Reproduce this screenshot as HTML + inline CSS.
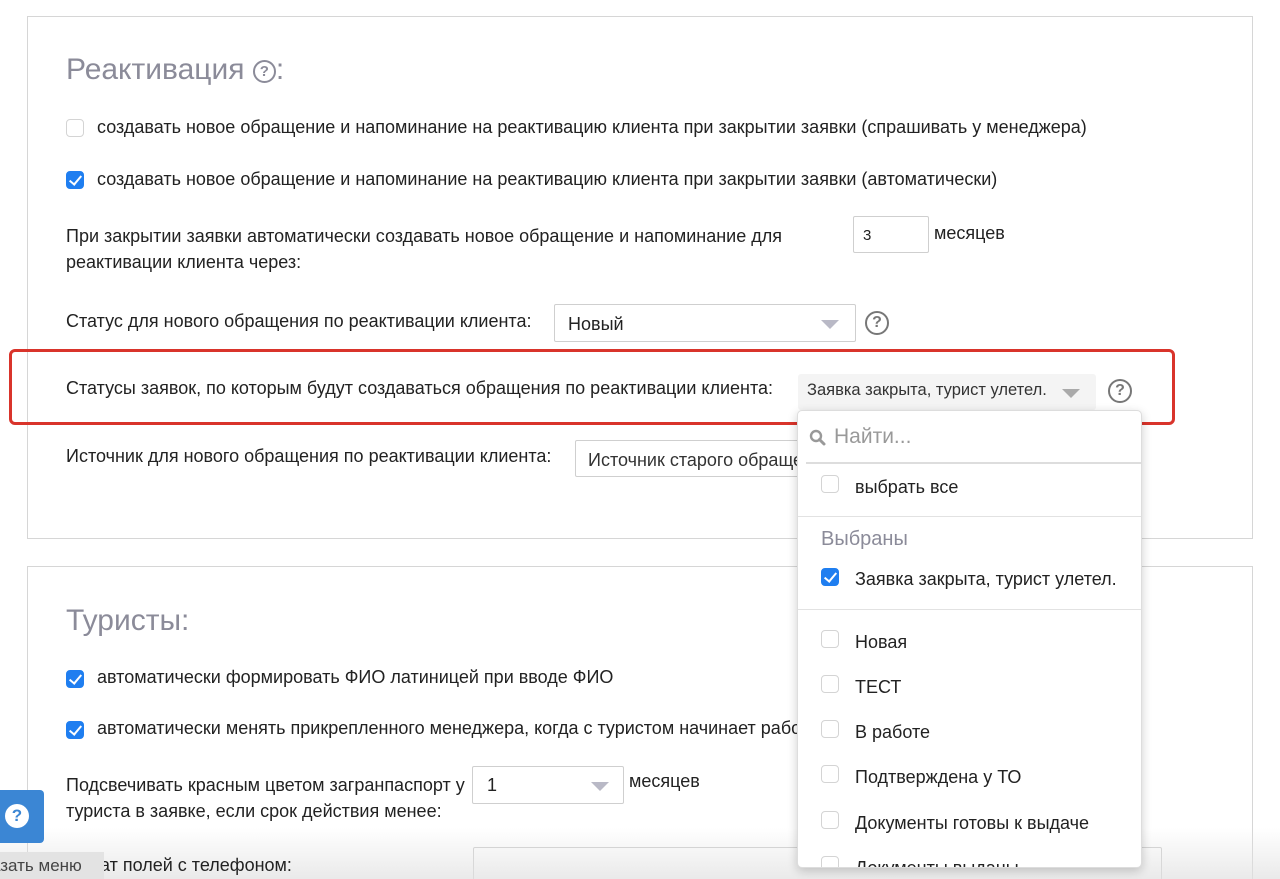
<!DOCTYPE html>
<html><head><meta charset="utf-8"><style>
*{box-sizing:border-box;margin:0;padding:0}
html,body{width:1280px;height:879px;overflow:hidden}
body{background:#fff;font-family:"Liberation Sans",Arial,sans-serif;color:#222;font-size:18px;position:relative}
.a{position:absolute;white-space:nowrap}
.panel{position:absolute;left:27px;width:1226px;border:1px solid #d6d6d6;background:#fff}
.h{color:#8b8b99;font-size:30px}
.cb{position:absolute;width:18px;height:18px;border:1px solid #d4d4d4;border-radius:4px;background:#fff}
.cb.on{background:#1f7ef0;border-color:#1f7ef0}
.cb.on:after{content:"";position:absolute;left:5px;top:1px;width:5px;height:10px;border:solid #fff;border-width:0 2.5px 2.5px 0;transform:rotate(40deg)}
.sel{position:absolute;border:1px solid #cfcfcf;background:#fff;border-radius:2px}
.tri{position:absolute;width:0;height:0;border-left:9px solid transparent;border-right:9px solid transparent;border-top:9px solid #b9b9c6}
.q{position:absolute;width:24px;height:24px;border:2px solid #777;border-radius:50%;color:#777;font-size:16px;font-weight:bold;text-align:center;line-height:20px}
.dd{position:absolute;left:797px;top:410px;width:345px;height:458px;background:#fff;border:1px solid #ddd;border-radius:5px;box-shadow:0 3px 10px rgba(0,0,0,.2);overflow:hidden}
.dd .sep{position:absolute;left:0;right:0;height:1px;background:#e2e2e2}
</style></head><body>
<div class="panel" style="top:16px;height:523px"></div>
<div class="panel" style="top:566px;height:330px"></div>

<div class="a h" style="left:66px;top:53px">Реактивация <span style="display:inline-block;width:23px;height:23px;border:2px solid #8b8b99;border-radius:50%;font-size:15px;font-weight:bold;text-align:center;line-height:19px;vertical-align:3px">?</span>:</div>

<div class="cb" style="left:66px;top:119px"></div>
<div class="a" style="left:97px;top:117px">создавать новое обращение и напоминание на реактивацию клиента при закрытии заявки (спрашивать у менеджера)</div>
<div class="cb on" style="left:66px;top:171px"></div>
<div class="a" style="left:97px;top:169px">создавать новое обращение и напоминание на реактивацию клиента при закрытии заявки (автоматически)</div>

<div class="a" style="left:66px;top:223px;line-height:26px">При закрытии заявки автоматически создавать новое обращение и напоминание для<br>реактивации клиента через:</div>
<div class="sel" style="left:853px;top:216px;width:76px;height:37px"><span class="a" style="left:9px;top:10px;font-size:15px">3</span></div>
<div class="a" style="left:934px;top:223px">месяцев</div>

<div class="a" style="left:66px;top:311px">Статус для нового обращения по реактивации клиента:</div>
<div class="sel" style="left:554px;top:304px;width:302px;height:38px"><span class="a" style="left:13px;top:9px">Новый</span><div class="tri" style="left:266px;top:15px"></div></div>
<div class="q" style="left:865px;top:311px">?</div>

<div style="position:absolute;left:9px;top:349px;width:1166px;height:76px;border:3px solid #d9342b;border-radius:6px"></div>
<div class="a" style="left:66px;top:378px">Статусы заявок, по которым будут создаваться обращения по реактивации клиента:</div>
<div style="position:absolute;left:798px;top:374px;width:298px;height:36px;background:#f4f4f4;border-radius:3px"><span class="a" style="left:9px;top:7px;font-size:16.5px;color:#333">Заявка закрыта, турист улетел.</span><div class="tri" style="left:264px;top:15px;border-top-color:#aaa"></div></div>
<div class="q" style="left:1108px;top:379px">?</div>

<div class="a" style="left:66px;top:446px">Источник для нового обращения по реактивации клиента:</div>
<div class="sel" style="left:575px;top:440px;width:300px;height:37px"><span class="a" style="left:12px;top:9px;color:#333">Источник старого обращения</span></div>

<div class="a h" style="left:66px;top:604px">Туристы:</div>
<div class="cb on" style="left:66px;top:670px"></div>
<div class="a" style="left:97px;top:667px">автоматически формировать ФИО латиницей при вводе ФИО</div>
<div class="cb on" style="left:66px;top:721px"></div>
<div class="a" style="left:97px;top:718px">автоматически менять прикрепленного менеджера, когда с туристом начинает работать другой менеджер</div>

<div class="a" style="left:66px;top:772px;line-height:26px">Подсвечивать красным цветом загранпаспорт у<br>туриста в заявке, если срок действия менее:</div>
<div class="sel" style="left:472px;top:766px;width:152px;height:38px"><span class="a" style="left:14px;top:8px">1</span><div class="tri" style="left:118px;top:15px"></div></div>
<div class="a" style="left:629px;top:771px">месяцев</div>
<div class="sel" style="left:473px;top:847px;width:689px;height:40px"></div>

<div style="position:absolute;left:0;top:828px;width:1280px;height:51px;background:linear-gradient(rgba(235,235,235,0),rgba(225,225,225,.7))"></div>
<div class="a" style="left:100px;top:855px;color:#222">ат полей с телефоном:</div>

<div style="position:absolute;left:-4px;top:790px;width:48px;height:53px;background:#3b86d4;border-radius:4px"><div style="position:absolute;left:9px;top:14px;width:24px;height:24px;border-radius:50%;background:#fff;color:#3b86d4;font-weight:bold;text-align:center;line-height:24px;font-size:17px">?</div></div>
<div style="position:absolute;left:0;top:852px;width:104px;height:27px;background:#e3e3e3"><span class="a" style="left:-9px;top:4px;color:#444;font-size:17px">азать меню</span></div>

<div class="dd">
  <svg class="a" style="left:11px;top:18px" width="18" height="18" viewBox="0 0 18 18"><circle cx="7" cy="7" r="5" fill="none" stroke="#999" stroke-width="2.4"/><path d="M10.5 10.5L15 15" stroke="#999" stroke-width="3" stroke-linecap="round"/></svg>
  <div class="a" style="left:36px;top:14px;font-size:21px;color:#999">Найти...</div>
  <div class="sep" style="top:51px;left:8px;height:2px;background:#ddd"></div>
  <div class="cb" style="left:23px;top:64px"></div><div class="a" style="left:57px;top:66px">выбрать все</div>
  <div class="sep" style="top:105px"></div>
  <div class="a" style="left:23px;top:117px;font-size:20px;color:#8b8b99">Выбраны</div>
  <div class="cb on" style="left:23px;top:157px"></div><div class="a" style="left:57px;top:158px">Заявка закрыта, турист улетел.</div>
  <div class="sep" style="top:198px"></div>
  <div class="cb" style="left:23px;top:219px"></div><div class="a" style="left:57px;top:221px">Новая</div>
  <div class="cb" style="left:23px;top:264px"></div><div class="a" style="left:57px;top:266px">ТЕСТ</div>
  <div class="cb" style="left:23px;top:309px"></div><div class="a" style="left:57px;top:311px">В работе</div>
  <div class="cb" style="left:23px;top:354px"></div><div class="a" style="left:57px;top:356px">Подтверждена у ТО</div>
  <div class="cb" style="left:23px;top:400px"></div><div class="a" style="left:57px;top:402px">Документы готовы к выдаче</div>
  <div class="cb" style="left:23px;top:445px"></div><div class="a" style="left:57px;top:447px">Документы выданы</div>
</div>
</body></html>
